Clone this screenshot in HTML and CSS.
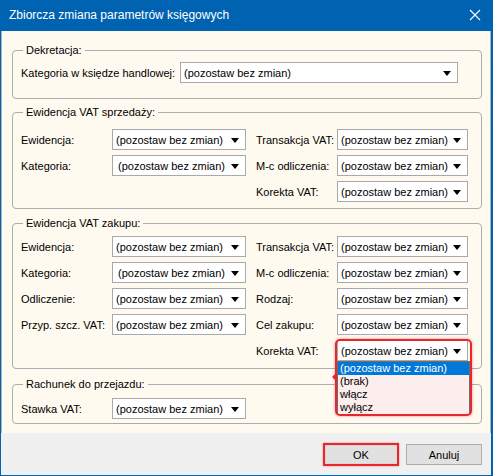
FILE: index.html
```html
<!DOCTYPE html>
<html lang="pl">
<head>
<meta charset="utf-8">
<title>Zbiorcza zmiana parametrów księgowych</title>
<link rel="stylesheet" href="styles.css">
</head>
<body>
<div class="window">
  <div class="titlebar">
    <span class="title">Zbiorcza zmiana parametrów księgowych</span>
    <svg class="close" width="12" height="12" viewBox="0 0 12 12"><path d="M1 1 L11 11 M11 1 L1 11" stroke="#fff" stroke-width="1.1" fill="none"/></svg>
  </div>
  <div class="client">
    <div class="panel">
      <div class="group g1">
        <div class="legend">Dekretacja:</div>
        <div class="dek-row">
          <span class="label dek-label">Kategoria w księdze handlowej:</span>
          <div class="select dek-select"><span>(pozostaw bez zmian)</span><i class="arrow"></i></div>
        </div>
      </div>

      <div class="group g2">
        <div class="legend">Ewidencja VAT sprzedaży:</div>
        <div class="grid">
          <span class="label">Ewidencja:</span>
          <div class="select"><span>(pozostaw bez zmian)</span><i class="arrow"></i></div>
          <span class="label rlabel">Transakcja VAT:</span>
          <div class="select rsel"><span>(pozostaw bez zmian)</span><i class="arrow"></i></div>

          <span class="label">Kategoria:</span>
          <div class="select shifted"><span>(pozostaw bez zmian)</span><i class="arrow"></i></div>
          <span class="label rlabel">M-c odliczenia:</span>
          <div class="select rsel"><span>(pozostaw bez zmian)</span><i class="arrow"></i></div>

          <span class="label rlabel c3">Korekta VAT:</span>
          <div class="select rsel"><span>(pozostaw bez zmian)</span><i class="arrow"></i></div>
        </div>
      </div>

      <div class="group g3">
        <div class="legend">Ewidencja VAT zakupu:</div>
        <div class="grid">
          <span class="label">Ewidencja:</span>
          <div class="select"><span>(pozostaw bez zmian)</span><i class="arrow"></i></div>
          <span class="label rlabel">Transakcja VAT:</span>
          <div class="select rsel"><span>(pozostaw bez zmian)</span><i class="arrow"></i></div>

          <span class="label">Kategoria:</span>
          <div class="select shifted"><span>(pozostaw bez zmian)</span><i class="arrow"></i></div>
          <span class="label rlabel">M-c odliczenia:</span>
          <div class="select rsel"><span>(pozostaw bez zmian)</span><i class="arrow"></i></div>

          <span class="label">Odliczenie:</span>
          <div class="select"><span>(pozostaw bez zmian)</span><i class="arrow"></i></div>
          <span class="label rlabel">Rodzaj:</span>
          <div class="select rsel"><span>(pozostaw bez zmian)</span><i class="arrow"></i></div>

          <span class="label">Przyp. szcz. VAT:</span>
          <div class="select"><span>(pozostaw bez zmian)</span><i class="arrow"></i></div>
          <span class="label rlabel">Cel zakupu:</span>
          <div class="select rsel"><span>(pozostaw bez zmian)</span><i class="arrow"></i></div>

          <span class="label rlabel c3">Korekta VAT:</span>
          <div class="select rsel open"><span>(pozostaw bez zmian)</span><i class="arrow"></i>
            <div class="highlight"></div>
            <i class="pointer"></i>
            <ul class="dropdown">
              <li class="active">(pozostaw bez zmian)</li>
              <li>(brak)</li>
              <li>włącz</li>
              <li>wyłącz</li>
            </ul>
          </div>
        </div>
      </div>

      <div class="group g4">
        <div class="legend">Rachunek do przejazdu:</div>
        <div class="grid">
          <span class="label">Stawka VAT:</span>
          <div class="select"><span>(pozostaw bez zmian)</span><i class="arrow"></i></div>
        </div>
      </div>
    </div>
    <div class="buttons">
      <button class="btn ok">OK</button>
      <button class="btn">Anuluj</button>
    </div>
  </div>
</div>
</body>
</html>
```

FILE: styles.css
```css
html, body {
  margin: 0;
  padding: 0;
}
body {
  font-family: "Liberation Sans", Arial, sans-serif;
  font-size: 11px;
  color: #000;
  background: #fff;
}
.window {
  width: 493px;
  height: 476px;
  box-sizing: border-box;
  background: #0063b1;
  padding: 0 2px 1px 1px;
  display: flex;
  flex-direction: column;
}
.titlebar {
  height: 31px;
  flex: none;
  display: flex;
  align-items: center;
  justify-content: space-between;
  padding: 0 10px 0 8px;
  color: #fff;
}
.title {
  font-size: 12px;
  line-height: 16px;
  margin-top: -1px;
}
.close {
  display: block;
  margin-top: -1px;
}
.client {
  flex: 1;
  background: #f0f0f0;
  display: flex;
  flex-direction: column;
}
.panel {
  height: 402px;
  flex: none;
  box-sizing: border-box;
  background: #fffaf0;
  border-left: 1px solid #b4b4b4;
  border-right: 1px solid #b4b4b4;
  display: flex;
  flex-direction: column;
  padding: 0 8px 0 10px;
}
.group {
  border: 1px solid #adadad;
  border-radius: 4px;
  display: flex;
  flex-direction: column;
  padding-left: 8px;
  padding-right: 12px;
}
.legend {
  align-self: flex-start;
  margin-top: -8px;
  margin-left: 2px;
  padding: 0 3px;
  line-height: 14px;
  height: 14px;
  background: #fffaf0;
}
.g1 { margin-top: 19px; padding-bottom: 15px; }
.g1 .dek-row { margin-top: 5px; }
.g2 { margin-top: 13px; padding-bottom: 6px; }
.g2 .grid { margin-top: 10px; }
.g3 { margin-top: 14px; padding-bottom: 7px; }
.g3 .grid { margin-top: 6px; }
.g4 { margin-top: 15px; padding-bottom: 4px; }
.g4 .grid { margin-top: 7px; }

.dek-row {
  display: flex;
  align-items: center;
}
.dek-label {
  width: 159px;
}
.dek-select {
  width: 278px;
  padding-left: 5px;
}
.grid {
  display: grid;
  grid-template-columns: 91px 134px 91px 131px;
  grid-auto-rows: 21px;
  row-gap: 5px;
}
.label {
  display: flex;
  align-items: center;
  white-space: nowrap;
}
.rlabel {
  padding-left: 10px;
}
.c3 {
  grid-column: 3;
}
.select {
  position: relative;
  box-sizing: border-box;
  height: 21px;
  background: #fff;
  border: 1px solid #a9a9a9;
  display: flex;
  align-items: center;
  justify-content: space-between;
  padding: 0 6px 0 3px;
  white-space: nowrap;
}
.select.shifted {
  padding-left: 5px;
}
.arrow {
  width: 0;
  height: 0;
  border-left: 4px solid transparent;
  border-right: 4px solid transparent;
  border-top: 5px solid #000;
  margin-top: 1px;
}
.dropdown {
  position: absolute;
  left: -1px;
  top: 20px;
  width: 133px;
  box-sizing: border-box;
  margin: 0;
  padding: 0;
  list-style: none;
  background: #fdeeee;
  border: 1px solid #6e6e6e;
  z-index: 2;
}
.dropdown li {
  height: 13px;
  line-height: 13px;
  padding-left: 2px;
}
.dropdown li.active {
  background: #0078d7;
  color: #fff;
}
.highlight {
  position: absolute;
  left: -3px;
  top: -2px;
  width: 137px;
  height: 77px;
  box-sizing: border-box;
  border: 2px solid #e8262e;
  border-radius: 5px;
  box-shadow: 0 0 3px rgba(232, 38, 46, 0.55);
  z-index: 3;
  pointer-events: none;
}
.pointer {
  position: absolute;
  left: -6px;
  top: 32px;
  width: 0;
  height: 0;
  border-top: 4px solid transparent;
  border-bottom: 4px solid transparent;
  border-right: 4px solid #e8262e;
  z-index: 3;
}
.buttons {
  display: flex;
  justify-content: flex-end;
  align-items: center;
  gap: 7px;
  padding: 10px 9px 0 0;
  height: 23px;
}
.btn {
  font-family: "Liberation Sans", Arial, sans-serif;
  font-size: 11px;
  color: #000;
  width: 76px;
  height: 21px;
  box-sizing: border-box;
  background: #e1e1e1;
  border: 1px solid #adadad;
  padding: 0;
  margin: 0;
}
.btn.ok {
  height: 23px;
  border: 2px solid #e8262e;
  box-shadow: 0 0 2px rgba(232, 38, 46, 0.5), inset 0 0 0 1px #d6d6d6;
}
```
